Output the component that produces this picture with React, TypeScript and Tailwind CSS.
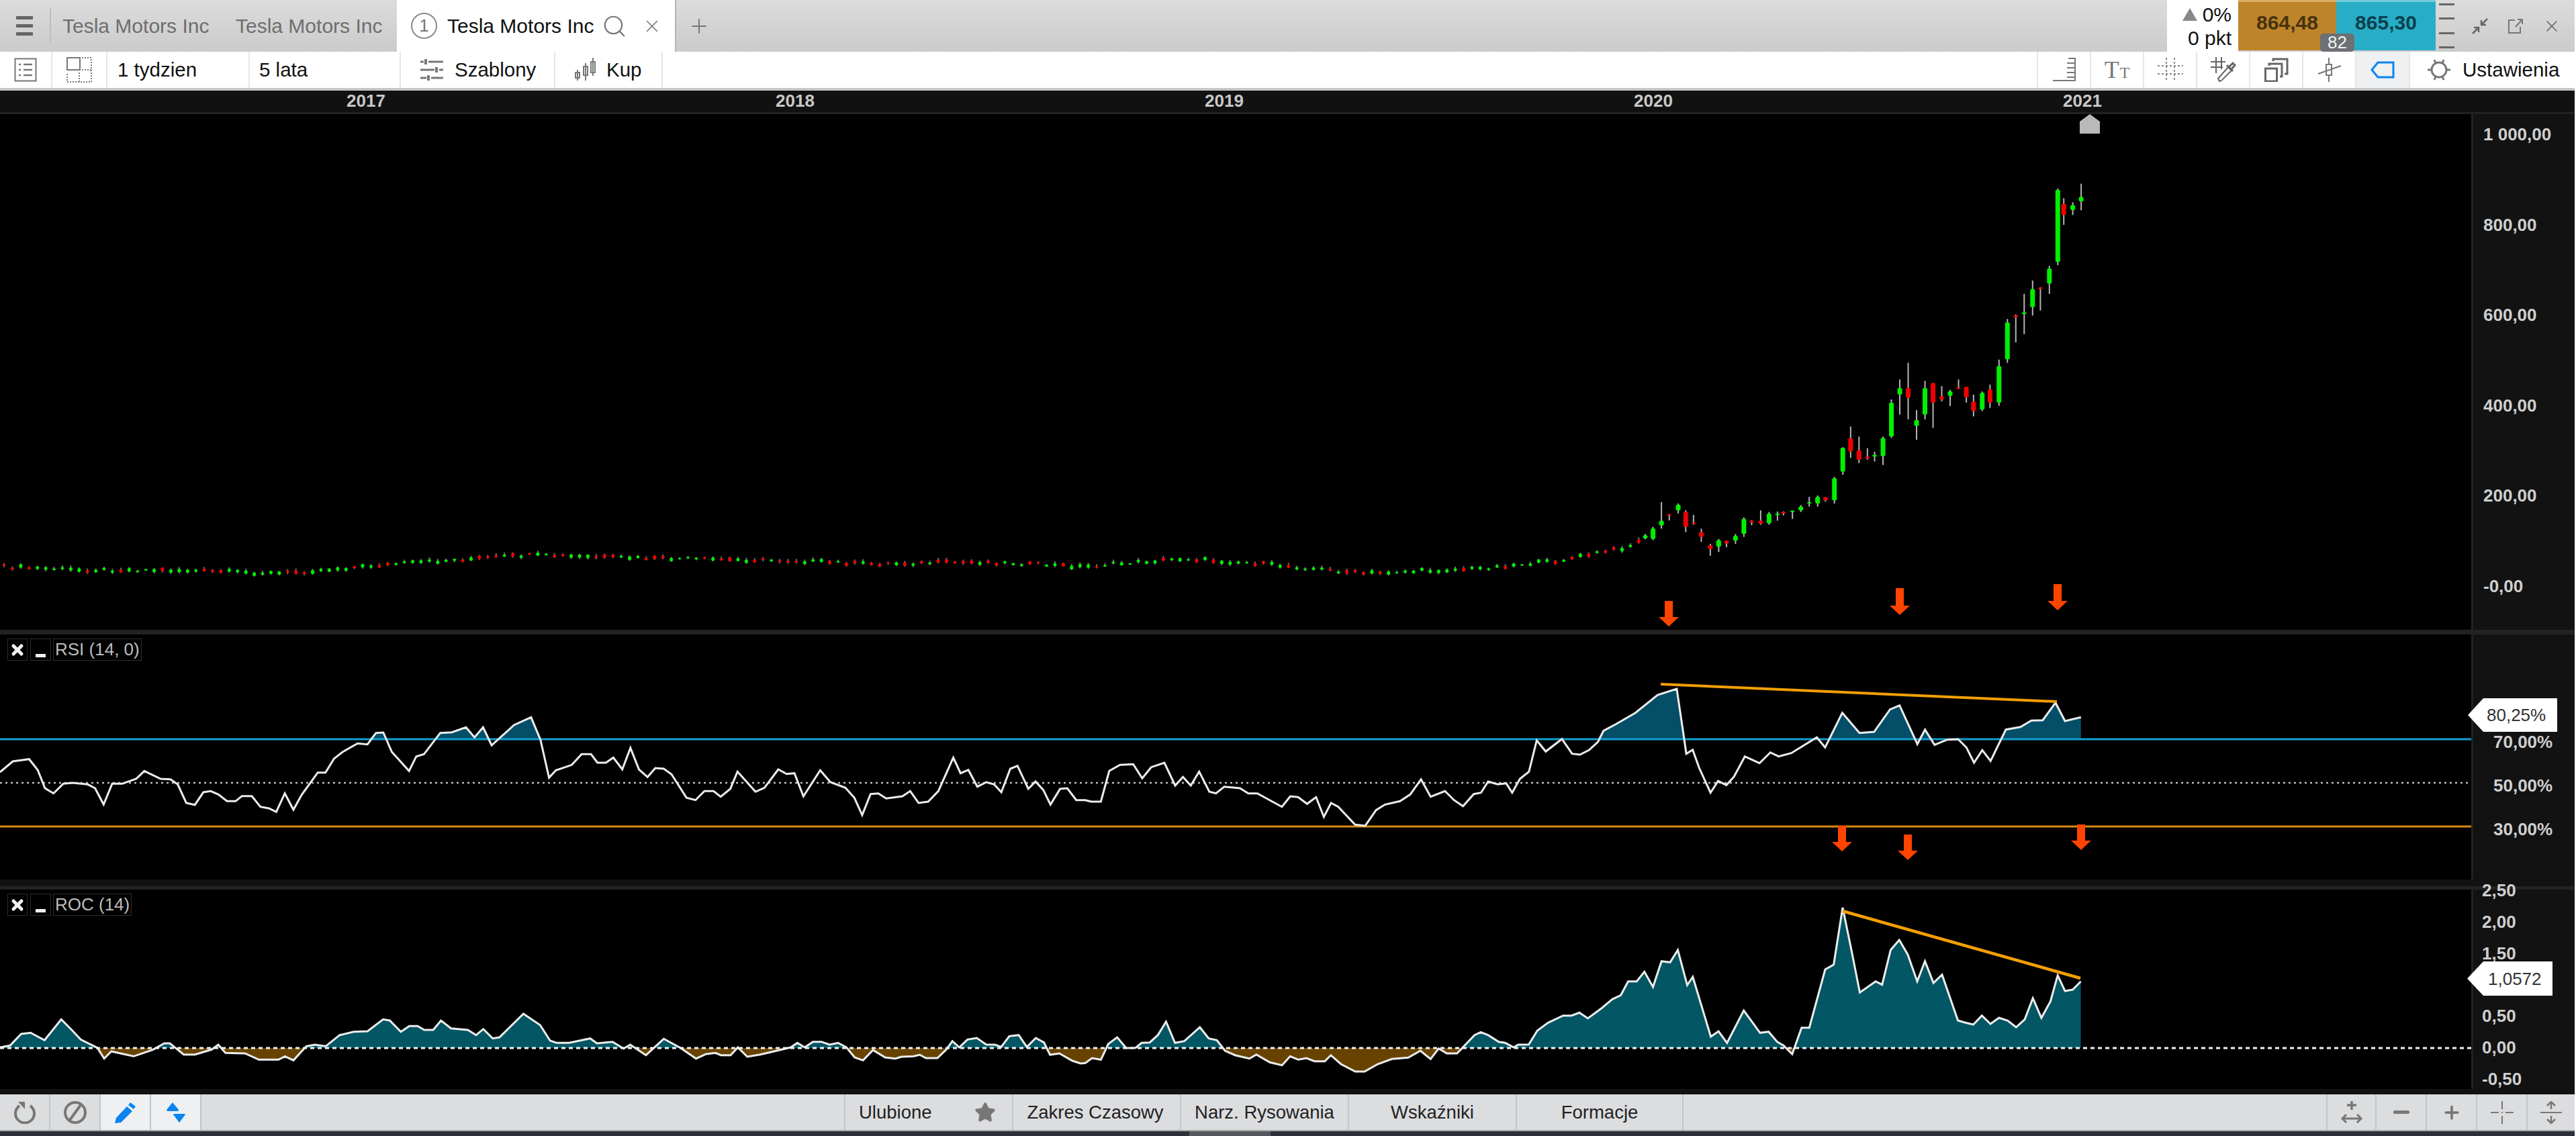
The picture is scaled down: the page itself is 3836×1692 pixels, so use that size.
import type { ReactNode } from 'react'
import { Search, X, Plus, Star } from 'lucide-react'

type Pt = [number, number]

const toPage = (raw: number[][], ox: number, sx: number, oy: number, sy: number): Pt[] =>
  raw.map(([x, y]) => [ox + x / sx, oy + y / sy])

const d = (pts: Pt[]) => pts.map(([x, y], i) => `${i ? 'L' : 'M'}${x.toFixed(1)} ${y.toFixed(1)}`).join(' ')

const rsi: Pt[] = [
  ...toPage([[0,690],[30,642],[68,632],[88,680],[105,762],[125,785],[148,742],[170,738],[205,745],[222,762],[242,835],[262,742],[285,742],[318,720],[337,685],[375,720],[398,722],[415,745],[435,828],[455,836],[475,780],[492,775],[510,790],[530,820],[550,820],[565,797],[588,797],[608,845],[628,852],[645,868],[665,785],[685,858],[705,790],[742,692],[760,692],[780,630],[800,600],[835,562],[858,566],[878,515],[895,513],[915,600],[955,685],[972,620],[990,610],[1028,515],[1055,512],[1088,490],[1108,535],[1128,490],[1148,570],[1200,480],[1240,445],[1262,545],[1282,715],[1298,682],[1335,658],[1358,610],[1380,610],[1395,648],[1415,648],[1432,625],[1453,678],[1472,582],[1492,678],[1512,712],[1530,672],[1550,675]], 0, 1.568, 920, 3),
  ...toPage([[0,280],[25,385],[40,395],[55,355],[70,355],[82,380],[98,345],[110,268],[140,358],[155,340],[178,258],[192,278],[205,275],[220,378],[248,262],[265,315],[290,340],[305,385],[318,462],[332,368],[345,365],[358,388],[385,378],[398,355],[412,408],[428,402],[445,355],[470,205],[482,275],[495,260],[510,335],[525,315],[538,325],[550,360],[565,255],[577,242],[595,345],[607,312],[620,350],[632,415],[648,345],[660,342],[675,395],[690,395],[700,402],[716,402],[730,265],[748,238],[770,235],[785,298],[800,248],[822,228],[840,330],[853,292],[866,330],[880,268],[897,358],[908,365],[922,335],[948,342],[962,365],[977,365],[1018,425],[1032,378],[1045,382],[1060,412],[1075,382],[1088,470],[1100,408],[1112,425],[1140,505],[1157,510],[1175,440],[1190,415],[1215,400],[1232,370],[1250,302],[1266,380],[1290,355],[1305,395],[1320,422],[1338,368],[1350,362],[1362,312],[1378,325],[1392,320],[1402,362],[1415,300],[1430,268],[1443,128],[1458,178],[1485,122],[1502,188],[1515,192],[1530,172],[1545,135]], 1000, 1.12, 1060, 3),
  ...toPage([[40,565],[60,535],[90,485],[125,405],[155,378],[165,570],[170,668],[180,650],[190,730],[208,842],[220,790],[233,808],[245,770],[262,680],[285,710],[302,662],[315,680],[335,665],[352,635],[375,595],[388,640],[415,485],[442,575],[465,570],[490,470],[505,452],[533,625],[545,560],[560,628],[580,605],[597,603],[610,640],[622,708],[635,652],[648,700],[672,560],[695,548],[712,520],[730,518],[750,440],[765,522],[790,505]], 2350, 1.055, 900, 3),
]

const roc: Pt[] = [
  ...toPage([[0,720],[18,712],[38,660],[55,655],[80,688],[110,595],[128,640],[145,685],[175,722],[187,770],[200,738],[240,760],[275,730],[295,702],[305,702],[330,752],[350,752],[380,730],[392,708],[405,745],[440,747],[465,775],[500,775],[512,760],[527,778],[550,715],[565,708],[585,715],[610,665],[635,650],[660,648],[688,595],[700,600],[720,650],[735,625],[750,625],[762,642],[778,642],[792,600],[810,635],[840,642],[855,665],[868,638],[885,680],[897,675],[940,570],[970,620],[988,690],[1000,700],[1022,700],[1060,680],[1072,702],[1100,695],[1120,725],[1132,708],[1160,755],[1192,682],[1222,722],[1250,770],[1268,750],[1285,745],[1295,755],[1312,755],[1325,720],[1342,762],[1365,752],[1395,735],[1420,720],[1432,700],[1445,720],[1460,695],[1475,695],[1490,708],[1505,700],[1520,720],[1535,765],[1550,778]], 0, 1.206, 1320, 3),
  ...toPage([[0,222],[30,255],[55,260],[70,252],[100,250],[115,243],[130,258],[158,258],[180,220],[195,182],[212,210],[232,175],[255,168],[278,197],[300,198],[315,208],[335,160],[358,155],[378,208],[400,168],[420,188],[435,243],[458,237],[490,270],[510,282],[522,280],[538,258],[560,265],[578,195],[600,165],[622,213],[645,212],[660,190],[680,188],[700,155],[720,95],[742,190],[765,182],[803,120],[825,170],[845,178],[865,225],[890,245],[925,260],[942,242],[975,277],[1005,290],[1025,250],[1045,265],[1065,258],[1085,272],[1110,272],[1125,245],[1150,285],[1185,318],[1208,318],[1240,285],[1275,262],[1315,256],[1345,225],[1370,262],[1390,215],[1410,237],[1435,237],[1460,190],[1478,155]], 1300, 1.65, 1490, 3),
  ...toPage([[8,652],[25,665],[50,695],[65,700],[85,720],[95,708],[120,707],[140,645],[165,610],[200,578],[220,578],[238,565],[258,590],[290,545],[315,505],[335,487],[352,425],[372,425],[390,382],[410,450],[430,335],[450,340],[468,285],[490,442],[503,405],[545,672],[563,648],[583,700],[622,555],[660,655],[680,650],[700,695],[715,712],[735,750],[757,632],[775,632],[812,372],[832,350],[853,95],[875,300],[893,475],[930,425],[945,440],[965,285],[985,240],[1005,305],[1027,425],[1045,335],[1065,432],[1085,395],[1122,600],[1140,610],[1158,618],[1178,578],[1198,615],[1218,588],[1238,600],[1258,630],[1278,595],[1297,500],[1317,588],[1338,515],[1355,398],[1372,468],[1390,462],[1409,425]], 2200, 1.568, 1320, 3),
]

// x, wick top, wick bottom, body top, body bottom, green?
const lastCandles: [number, number, number, number, number, number][] = [
  [1454,85,185,135,152,1],[1426,155,203,165,185,1],[1396,140,240,160,203,0],[1376,103,392,108,380,1],[1348,395,500,405,462,1],[1318,475,563,476,482,0],[1292,450,582,482,550,1],[1264,500,652,570,576,1],[1236,578,683,582,588,0],[1208,595,760,608,747,1],[1180,748,922,772,910,1],[1150,842,930,860,910,0],[1124,868,942,873,936,1],[1095,880,962,906,942,0],[1071,850,910,850,890,0],[1045,823,858,854,859,0],[1017,862,923,867,885,1],[989,848,905,886,898,0],[960,836,1005,836,910,0],[933,828,973,855,955,1],[905,938,1050,976,998,1],[877,760,973,855,892,0],[849,823,955,855,880,1],[821,898,1043,910,1038,1],[793,1038,1145,1043,1112,1],[765,1095,1132,1107,1113,1],[741,1082,1125,1113,1120,0],[713,1038,1138,1090,1125,0],[685,1000,1118,1044,1094,0],[659,1078,1182,1080,1170,1],[631,1190,1290,1195,1278,1],[601,1266,1283,1266,1278,0],[575,1260,1302,1265,1290,1],[547,1265,1302,1285,1290,1],[519,1296,1322,1302,1316,1],[491,1316,1348,1317,1321,1],[461,1320,1335,1322,1328,0],[441,1320,1355,1328,1334,1],[413,1322,1370,1328,1365,1],[385,1316,1370,1355,1366,0],[355,1353,1372,1355,1361,0],[329,1342,1416,1348,1405,1],[301,1405,1442,1412,1430,1],[271,1430,1455,1430,1441,0],[245,1424,1473,1428,1453,1],[217,1442,1487,1448,1462,0],[187,1385,1435,1398,1416,0],[161,1333,1370,1362,1365,0],[135,1316,1398,1322,1378,0],[110,1290,1328,1295,1316,1],[80,1330,1354,1330,1335,0],[54,1285,1385,1355,1373,1],[26,1378,1428,1384,1424,1],[0,1405,1425,1410,1422,1],
]

const pricePath: Pt[] = [[0,841],[122,846],[245,846],[416,851],[563,839],[783,824],[978,829],[1174,832],[1296,837],[1468,834],[1614,841],[1761,829],[1883,837],[2030,851],[2201,844],[2324,832],[2422,812],[2450,800]]

const priceAt = (x: number) => {
  for (let i = 1; i < pricePath.length; i++) {
    const [x0, y0] = pricePath[i - 1]
    const [x1, y1] = pricePath[i]
    if (x <= x1) return y0 + ((y1 - y0) * (x - x0)) / (x1 - x0)
  }
  return 800
}

const noise = (n: number) => {
  const v = Math.sin(n * 12.9898) * 43758.5453
  return v - Math.floor(v)
}

function Candles() {
  const early = Array.from({ length: 197 }, (_, i) => {
    const x = 6 + 12.42 * i
    const mid = priceAt(x) + 3 + (noise(i) - 0.5) * 5
    const h = 2 + noise(i + 300) * 4
    return { x, wt: mid - h / 2 - noise(i + 500) * 3, wb: mid + h / 2 + noise(i + 700) * 2, bt: mid - h / 2, bb: mid + h / 2, up: noise(i + 900) > 0.42, w: 5, wick: '#6e6e6e' }
  })
  const late = lastCandles.map(([zx, wt, wb, bt, bb, up]) => ({
    x: 2450 + zx / 2.24,
    wt: 240 + wt / 2.53,
    wb: 240 + wb / 2.53,
    bt: 240 + bt / 2.53,
    bb: 240 + Math.max(bb, bt + 5) / 2.53,
    up: up === 1,
    w: 7,
    wick: '#b4b4b4',
  }))
  return (
    <g>
      {[...early, ...late].map((c, i) => (
        <g key={i}>
          <rect x={c.x - 1} y={c.wt} width={2} height={c.wb - c.wt} fill={c.wick} />
          <rect x={c.x - c.w / 2} y={c.bt} width={c.w} height={c.bb - c.bt} rx={2} fill={c.up ? '#00f000' : '#f00000'} />
        </g>
      ))}
    </g>
  )
}

function DownArrow({ x, top, bottom }: { x: number; top: number; bottom: number }) {
  return (
    <polygon
      fill="#ff4400"
      points={`${x - 6},${top} ${x + 6},${top} ${x + 6},${bottom - 14} ${x + 15},${bottom - 14} ${x},${bottom} ${x - 15},${bottom - 14} ${x - 6},${bottom - 14}`}
    />
  )
}

function Legend({ label, top }: { label: string; top: string }) {
  return (
    <div className={`absolute left-[11px] flex h-[33px] gap-[4px] text-[26px] leading-[31px] ${top}`}>
      <div className="flex w-[30px] items-center justify-center border border-[#2e2e2e]">
        <X size={24} strokeWidth={5} color="#f2f2f2" />
      </div>
      <div className="flex w-[31px] items-end justify-center border border-[#2e2e2e] pb-[4px]">
        <div className="h-[5px] w-[15px] bg-[#f2f2f2]" />
      </div>
      <div className="-ml-[1px] border border-[#2e2e2e] px-[2px] whitespace-nowrap text-[#bdbdbd]">{label}</div>
    </div>
  )
}

function Ico({ w = 44, h = 44, box, children, stroke = '#777' }: { w?: number; h?: number; box: string; children: ReactNode; stroke?: string }) {
  return (
    <svg width={w} height={h} viewBox={box} fill="none" stroke={stroke} strokeWidth={2}>
      {children}
    </svg>
  )
}

const toolCell = 'flex h-full shrink-0 items-center justify-center border-l-2 border-[#e6e6e6]'
const bottomIcon = 'flex h-full w-[75px] shrink-0 items-center justify-center border-r-2 border-[#c4c5c7]'
const bottomTab = 'flex h-full w-[250px] shrink-0 items-center justify-center border-l-2 border-[#c4c5c7] text-[27.5px] text-[#222]'

const rocZero = 1561
const rsiTop = 1101

export default function App() {
  const rsiFill = `${d(rsi)} L${rsi[rsi.length - 1][0]} ${rsiTop} L0 ${rsiTop} Z`
  const rocFill = `${d(roc)} L${roc[roc.length - 1][0]} ${rocZero} L0 ${rocZero} Z`

  return (
    <div className="flex h-[1692px] w-[3836px] flex-col overflow-hidden bg-white pr-[2px] font-['Liberation_Sans',sans-serif]">
      {/* Tabs */}
      <div className="flex h-[77px] shrink-0 bg-gradient-to-b from-[#dcdcdc] to-[#cbcbcb] text-[30px] text-[#6e6e6e]">
        <div className="my-[12px] flex w-[76px] shrink-0 flex-col items-center justify-center gap-[7px] border-r-2 border-[#bdbdbd] pr-[2px]">
          <div className="h-[5px] w-[25px] bg-[#666]" />
          <div className="h-[5px] w-[25px] bg-[#666]" />
          <div className="h-[5px] w-[25px] bg-[#666]" />
        </div>
        <div className="flex w-[258px] shrink-0 items-center pl-[17px]">Tesla Motors Inc</div>
        <div className="flex w-[257px] shrink-0 items-center pl-[17px]">Tesla Motors Inc</div>
        <div className="flex w-[414px] shrink-0 items-center bg-white pl-[21px] text-[#111]">
          <div className="flex h-[39px] w-[39px] shrink-0 items-center justify-center rounded-full border-2 border-[#8a8a8a] text-[26px] text-[#777]">1</div>
          <span className="ml-[15px]">Tesla Motors Inc</span>
          <Search size={38} strokeWidth={1.4} color="#777" className="ml-[12px] shrink-0" />
          <X size={30} strokeWidth={1.3} color="#777" className="ml-[22px] shrink-0" />
        </div>
        <div className="flex w-[72px] shrink-0 items-center justify-center border-l-2 border-[#b5b5b5] pr-[2px]">
          <Plus size={34} strokeWidth={1.4} color="#777" />
        </div>
        <div className="flex-1" />
        <div className="flex w-[106px] shrink-0 flex-col items-end justify-center bg-white pr-[10px] text-[#111]">
          <div className="flex h-[36px] items-center gap-[8px]">
            <div className="h-0 w-0 border-x-[11px] border-b-[19px] border-x-transparent border-b-[#888]" />
            <span>0%</span>
          </div>
          <div className="h-[34px] leading-[34px]">0 pkt</div>
        </div>
        <div className="relative flex h-[75px] shrink-0">
          <div className="flex w-[146px] items-center justify-center border-t-[3px] border-[#d9ad68] bg-[#bd8429] pb-[12px] text-[30px] font-bold text-[#47320f]">864,48</div>
          <div className="flex w-[148px] items-center justify-center border-t-[3px] border-[#74c9d8] bg-[#27aec6] pb-[12px] text-[30px] font-bold text-[#0b3f4c]">865,30</div>
          <div className="absolute top-[50px] left-[122px] flex h-[27px] w-[51px] items-center justify-center rounded-[5px] bg-[#6d7075] text-[26px] text-[#f2f2f2]">82</div>
        </div>
        <div className="flex w-[33px] shrink-0 flex-col items-center justify-between py-[5px]">
          {[0, 1, 2, 3].map(i => (
            <div key={i} className="h-[3px] w-[23px] bg-[#666]" />
          ))}
        </div>
        <div className="flex w-[174px] shrink-0 items-center justify-between pr-[20px] pl-[20px]">
          <Ico w={26} h={26} box="0 0 26 26" stroke="#666">
            <path d="M24 2 L15 11 M15 4 V11 H22 M2 24 L11 15 M4 15 H11 V22" strokeWidth={2.5} />
          </Ico>
          <Ico w={24} h={24} box="0 0 24 24">
            <path d="M11 3 H2 V22 H19 V13 M12 13 L22 2 M15 2 H22 V9" />
          </Ico>
          <X size={28} strokeWidth={1.4} color="#666" />
        </div>
      </div>

      {/* Toolbar */}
      <div className="flex h-[58px] shrink-0 border-b-[4px] border-[#c6c6c6] text-[29.5px] text-[#111]">
        <div className="flex w-[76px] shrink-0 items-center justify-center">
          <Ico w={34} h={36} box="0 0 34 36">
            <rect x="1.5" y="1.5" width="31" height="33" />
            <path d="M7 10 H10 M14 10 H27 M7 18 H10 M14 18 H27 M7 26 H10 M14 26 H27" strokeWidth={2.5} />
          </Ico>
        </div>
        <div className={`${toolCell} w-[82px]`}>
          <Ico w={38} h={38} box="0 0 38 38">
            <rect x="1" y="1" width="19" height="18" />
            <path d="M23 1 H37 V37 H1 V23 M19 23 V37 M23 19 H37" strokeDasharray="2 2" />
          </Ico>
        </div>
        <div className={`${toolCell} w-[212px] justify-start pl-[15px]`}>1 tydzien</div>
        <div className={`${toolCell} w-[225px] justify-start pl-[14px]`}>5 lata</div>
        <div className={`${toolCell} w-[230px] justify-start gap-[16px] pl-[28px]`}>
          <Ico w={36} h={32} box="0 0 36 32" stroke="#777">
            <path d="M1 4 H6 M13 4 H35 M1 16 H22 M29 16 H35 M1 28 H10 M17 28 H35" strokeWidth={3} />
            <path d="M9 0 V8 M25 12 V20 M13 24 V32" strokeWidth={4} />
          </Ico>
          Szablony
        </div>
        <div className={`${toolCell} w-[160px] justify-start gap-[14px] pl-[28px]`}>
          <Ico w={34} h={36} box="0 0 34 36">
            <path d="M5 18 V34 M17 8 V34 M28 0 V27" />
            <rect x="2" y="22" width="6" height="8" />
            <rect x="14" y="13" width="6" height="13" />
            <rect x="25" y="6" width="6" height="16" />
          </Ico>
          Kup
        </div>
        <div className="flex-1 border-l-2 border-[#e6e6e6]" />
        <div className={`${toolCell} w-[79px]`}>
          <Ico w={36} h={36} box="0 0 36 36">
            <path d="M1 34 H34 V1 H24 M22 8 H34 M22 15 H34 M22 22 H34 M22 29 H34" />
          </Ico>
        </div>
        <div className={`${toolCell} w-[79px] items-end gap-[1px] pb-[12px] font-['Liberation_Serif',serif] text-[#777]`}>
          <span className="text-[36px] leading-[30px]">T</span>
          <span className="text-[24px] leading-[22px]">T</span>
        </div>
        <div className={`${toolCell} w-[79px]`}>
          <Ico w={38} h={36} box="0 0 38 36" stroke="#888">
            <path d="M13 0 V36 M25 0 V36 M0 12 H38 M0 24 H38" strokeDasharray="3 3" />
          </Ico>
        </div>
        <div className={`${toolCell} w-[79px]`}>
          <Ico w={38} h={38} box="0 0 38 38" stroke="#666">
            <path d="M8 0 V24 M16 0 V18 M0 7 H22 M0 15 H18" />
            <path d="M13 36 L11 32 L26 15 L31 20 L16 35 Z" />
            <path d="M24 12 L33 21 M28 14 L33 9 L36 12 L31 18" strokeWidth={3} />
          </Ico>
        </div>
        <div className={`${toolCell} w-[79px]`}>
          <Ico w={36} h={36} box="0 0 36 36" stroke="#666">
            <rect x="1.5" y="16" width="17" height="19" strokeWidth={3} />
            <path d="M7 12 V9 H26 V28 H23 M13 5 V2 H34 V24 H30" strokeWidth={3} />
          </Ico>
        </div>
        <div className={`${toolCell} w-[79px]`}>
          <Ico w={36} h={36} box="0 0 36 36">
            <path d="M17 0 V9 M17 27 V36 M1 24 L35 12" />
            <rect x="13" y="10" width="8" height="16" />
          </Ico>
        </div>
        <div className={`${toolCell} w-[80px] bg-[#eef0f2]`}>
          <Ico w={36} h={26} box="0 0 36 26" stroke="#0a84f0">
            <path d="M11 2 H34 V24 H11 L2 13 Z" strokeWidth={3} />
          </Ico>
        </div>
        <div className={`${toolCell} w-[247px] justify-start gap-[18px] pl-[26px]`}>
          <Ico w={34} h={32} box="0 0 34 32" stroke="#777">
            <circle cx="17" cy="16" r="11" strokeWidth={3} />
            <path d="M10 1 L12 6 M24 1 L22 6 M10 31 L12 26 M24 31 L22 26 M0 16 H6 M28 16 H34" strokeWidth={3} />
          </Ico>
          Ustawienia
        </div>
      </div>

      {/* Time axis */}
      <div className="flex h-[35px] shrink-0 border-b-[3px] border-[#222] bg-[#111] text-[26px] leading-[30px] font-bold text-[#c8c8c8]">
        <div className="w-[514px] shrink-0" />
        {['2017', '2018', '2019', '2020', '2021'].map(y => (
          <div key={y} className="w-[639px] shrink-0 pl-[2px]">{y}</div>
        ))}
      </div>

      {/* Price */}
      <div className="flex h-[768px] shrink-0 bg-black">
        <svg className="w-[3680px] shrink-0" height="768" viewBox="0 170 3680 768">
          <Candles />
          <polygon points="3097,199 3127,199 3127,181 3112,170 3097,181" fill="#b9b9b9" />
          <DownArrow x={2485} top={895} bottom={933} />
          <DownArrow x={2829} top={876} bottom={916} />
          <DownArrow x={3064} top={870} bottom={909} />
        </svg>
        <div className="flex flex-1 flex-col gap-[104.6px] border-l-[3px] border-[#222] bg-[#121212] pt-[15px] pl-[15px] text-[26px] leading-[30px] font-bold text-[#cfcfcf]">
          {['1 000,00', '800,00', '600,00', '400,00', '200,00', '-0,00'].map(v => (
            <div key={v}>{v}</div>
          ))}
        </div>
      </div>
      <div className="h-[7px] shrink-0 bg-[#222]" />

      {/* RSI */}
      <div className="relative flex h-[365px] shrink-0 bg-black">
        <svg className="w-[3680px] shrink-0" height="365" viewBox="0 945 3680 365">
          <defs>
            <clipPath id="aboveRsi">
              <rect x="0" y="945" width="3680" height={rsiTop - 945} />
            </clipPath>
          </defs>
          <path d={rsiFill} fill="#044e68" clipPath="url(#aboveRsi)" />
          <line x1="0" x2="3680" y1={rsiTop} y2={rsiTop} stroke="#12a0cf" strokeWidth="3" />
          <line x1="0" x2="3680" y1="1166" y2="1166" stroke="#bdbdbd" strokeWidth="2.5" strokeDasharray="3 5" />
          <line x1="0" x2="3680" y1="1231" y2="1231" stroke="#d88a12" strokeWidth="3" />
          <path d={d(rsi)} fill="none" stroke="#ececec" strokeWidth="3" />
          <line x1="2473" x2="3063" y1="1019" y2="1045" stroke="#f29f05" strokeWidth="4" />
          <DownArrow x={2743} top={1230} bottom={1268} />
          <DownArrow x={2841} top={1243} bottom={1281} />
          <DownArrow x={3099} top={1228} bottom={1266} />
        </svg>
        <div className="relative flex flex-1 flex-col gap-[35px] border-l-[3px] border-[#222] bg-[#121212] pt-[145px] pl-[30px] text-[26px] leading-[30px] font-bold text-[#cfcfcf]">
          {['70,00%', '50,00%', '30,00%'].map(v => (
            <div key={v}>{v}</div>
          ))}
          <div className="absolute top-[95px] -left-[8px] flex h-[50px] w-[133px] items-center bg-white pl-[28px] font-normal text-[#333] [clip-path:polygon(23px_0,100%_0,100%_100%,23px_100%,0_50%)]">80,25%</div>
        </div>
        <Legend label="RSI (14, 0)" top="top-[6px]" />
      </div>
      <div className="h-[15px] shrink-0 border-t-[10px] border-b-[5px] border-t-[#121212] border-b-[#222]" />

      {/* ROC */}
      <div className="relative flex h-[297px] shrink-0 bg-black">
        <svg className="w-[3680px] shrink-0" height="297" viewBox="0 1325 3680 297">
          <defs>
            <clipPath id="aboveZero">
              <rect x="0" y="1325" width="3680" height={rocZero - 1325} />
            </clipPath>
            <clipPath id="belowZero">
              <rect x="0" y={rocZero} width="3680" height={1622 - rocZero} />
            </clipPath>
          </defs>
          <path d={rocFill} fill="#035663" clipPath="url(#aboveZero)" />
          <path d={rocFill} fill="#684300" clipPath="url(#belowZero)" />
          <path d={d(roc)} fill="none" stroke="#ececec" strokeWidth="3" />
          <line x1="0" x2="3680" y1={rocZero} y2={rocZero} stroke="#f2f2f2" strokeWidth="3" strokeDasharray="6 5" />
          <line x1="2744" x2="3098" y1="1357" y2="1457" stroke="#f29f05" strokeWidth="4.5" />
        </svg>
        <div className="relative flex flex-1 flex-col border-l-[3px] border-[#222] bg-[#121212] pl-[13px] text-[26px] leading-[30px] font-bold text-[#cfcfcf]">
          <div className="-mt-[14px] flex flex-col gap-[16.8px]">
            {['2,50', '2,00', '1,50', '', '0,50', '0,00', '-0,50'].map((v, i) => (
              <div key={i} className="h-[30px]">{v}</div>
            ))}
          </div>
          <div className="absolute top-[107px] -left-[9px] flex h-[51px] w-[127px] items-center bg-white pl-[31px] font-normal text-[#333] [clip-path:polygon(24px_0,100%_0,100%_100%,24px_100%,0_50%)]">1,0572</div>
        </div>
        <Legend label="ROC (14)" top="top-[6px]" />
      </div>
      <div className="h-[8px] shrink-0 bg-[#111]" />

      {/* Bottom bar */}
      <div className="flex h-[55px] shrink-0 border-b-2 border-[#a8a8a8] bg-[#dcdddf]">
        <div className={`${bottomIcon} w-[72px]`}>
          <Ico w={34} h={34} box="0 0 34 34" stroke="#777">
            <path d="M9 7 A14 14 0 1 0 25 7" strokeWidth={4} />
            <path d="M7 1 H17 V12 Z" fill="#777" stroke="none" />
          </Ico>
        </div>
        <div className={bottomIcon}>
          <Ico w={34} h={34} box="0 0 34 34" stroke="#777">
            <circle cx="17" cy="17" r="15" strokeWidth={4} />
            <path d="M9 28 L25 6" strokeWidth={4} />
          </Ico>
        </div>
        <div className={`${bottomIcon} bg-[#eef0f2]`}>
          <svg width="34" height="34" viewBox="0 0 34 34" fill="#0a84f0">
            <path d="M24 2 L32 8 L29 12 L21 6 Z M19 8 L27 15 L10 32 L1 33 L3 25 Z" />
          </svg>
        </div>
        <div className={`${bottomIcon} bg-[#eef0f2]`}>
          <svg width="28" height="30" viewBox="0 0 28 30" fill="#0a84f0">
            <path d="M9 0 L18 11 Q18 13 16 13 H2 Q0 13 0 11 Z M12 17 H26 Q28 17 28 18 L19 30 L10 18 Q10 17 12 17 Z" />
          </svg>
        </div>
        <div className="w-[957px] shrink-0" />
        <div className={`${bottomTab} justify-start gap-[63px] pl-[20px]`}>
          Ulubione
          <Star size={32} fill="#777" color="#777" />
        </div>
        <div className={`${bottomTab} pr-[4px]`}>Zakres Czasowy</div>
        <div className={bottomTab}>Narz. Rysowania</div>
        <div className={bottomTab}>Wskaźniki</div>
        <div className={`${bottomTab} border-r-2`}>Formacje</div>
        <div className="flex-1" />
        <div className={`${bottomIcon} border-l-2`}>
          <Ico w={34} h={34} box="0 0 34 34" stroke="#777">
            <path d="M17 0 V13 M10 6 H24" strokeWidth={3.5} />
            <path d="M3 26 H31 M9 20 L3 26 L9 32 M25 20 L31 26 L25 32" strokeWidth={3} />
          </Ico>
        </div>
        <div className={bottomIcon}>
          <div className="h-[5px] w-[24px] rounded-[2px] bg-[#777]" />
        </div>
        <div className={bottomIcon}>
          <Plus size={30} strokeWidth={3} color="#777" />
        </div>
        <div className={bottomIcon}>
          <Ico w={34} h={34} box="0 0 34 34" stroke="#777">
            <path d="M17 0 V12 M17 22 V34 M0 17 H12 M22 17 H34" />
            <rect x="16" y="16" width="2" height="2" fill="#777" stroke="none" />
          </Ico>
        </div>
        <div className="flex h-full w-[70px] shrink-0 items-center justify-center">
          <Ico w={34} h={34} box="0 0 34 34" stroke="#777">
            <path d="M1 17 H33" />
            <path d="M17 1 V12 M11 7 L17 1 L23 7 M17 22 V33 M11 27 L17 33 L23 27" strokeWidth={2.5} />
          </Ico>
        </div>
      </div>

      {/* Scroll strip */}
      <div className="flex h-[7px] shrink-0 bg-[#2d3038]">
        <div className="w-[1771px] shrink-0" />
        <div className="w-[121px] shrink-0 bg-[#55585f]" />
      </div>
    </div>
  )
}
